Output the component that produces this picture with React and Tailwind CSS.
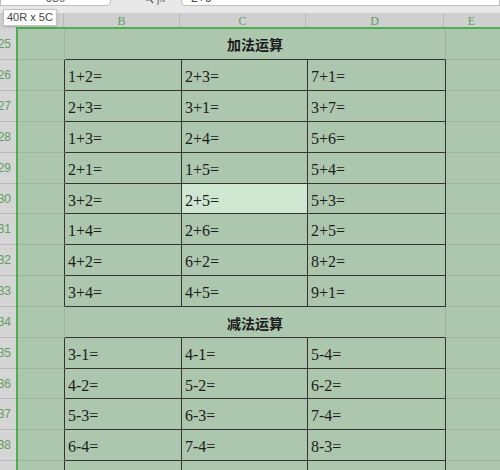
import React from 'react';

const rows = [
  { n: 25, h: 32, title: '加法运算' },
  { n: 26, h: 31, cells: ['1+2=', '2+3=', '7+1='] },
  { n: 27, h: 31, cells: ['2+3=', '3+1=', '3+7='] },
  { n: 28, h: 31, cells: ['1+3=', '2+4=', '5+6='] },
  { n: 29, h: 31, cells: ['2+1=', '1+5=', '5+4='] },
  { n: 30, h: 30, cells: ['3+2=', '2+5=', '5+3='], active: 1 },
  { n: 31, h: 31, cells: ['1+4=', '2+6=', '2+5='] },
  { n: 32, h: 31, cells: ['4+2=', '6+2=', '8+2='] },
  { n: 33, h: 31, cells: ['3+4=', '4+5=', '9+1='] },
  { n: 34, h: 31, title: '减法运算' },
  { n: 35, h: 31, cells: ['3-1=', '4-1=', '5-4='] },
  { n: 36, h: 30, cells: ['4-2=', '5-2=', '6-2='] },
  { n: 37, h: 31, cells: ['5-3=', '6-3=', '7-4='] },
  { n: 38, h: 31, cells: ['6-4=', '7-4=', '8-3='] },
  { n: 39, h: 31, cells: ['', '', ''] },
];

const widths = ['w-[117px]', 'w-[126px]', 'w-[138px]'];
const serif = { fontFamily: '"Liberation Serif", "Times New Roman", serif' };
const sans = { fontFamily: '"Liberation Sans", Arial, sans-serif' };

function Row({ r }) {
  // the row above a table row, or a table row itself, gets dark bottom lines
  const next = rows.find((x) => x.n === r.n + 1);
  const darkBottom = r.cells || (next && next.cells);
  const inTable = !!r.cells;
  return (
    <div className="flex" style={{ height: r.h }}>
      <div className="w-[16px] shrink-0 border-b border-[#b9b9b9] bg-[#d5d5d5] flex items-center justify-end pr-[5px] text-[12px] text-[#5f9e5f] overflow-hidden whitespace-nowrap" style={sans}>
        {r.n}
      </div>
      <div className={`w-[49px] shrink-0 border-b border-b-[#9fb5a0] border-r ${inTable ? 'border-r-[#333]' : 'border-r-[#9fb5a0]'}`} />
      {r.title ? (
        <div className={`w-[381px] shrink-0 border-r border-r-[#9fb5a0] border-b ${darkBottom ? 'border-b-[#333]' : 'border-b-[#9fb5a0]'} flex items-center justify-center pt-[2px] font-bold text-[14px] text-[#1a1a1a]`} style={{ fontFamily: '"Noto Sans CJK SC", sans-serif' }}>
          {r.title}
        </div>
      ) : (
        r.cells.map((c, i) => (
          <div key={i} className={`${widths[i]} shrink-0 border-r border-r-[#333] border-b border-b-[#333] flex items-center pt-[4px] pl-[3px] text-[16px] text-[#1c1c1c] ${r.active === i ? 'bg-[#cfe7d0]' : ''}`} style={serif}>
            {c}
          </div>
        ))
      )}
      <div className="flex-1 border-b border-b-[#9fb5a0]" />
    </div>
  );
}

export default function App() {
  return (
    <div className="relative w-[500px] h-[470px] overflow-hidden bg-[#adc7ae]">
      {/* formula bar, scrolled mostly off the top */}
      <div className="relative h-[13px] bg-[#e8e8e8] overflow-hidden">
        <div className="absolute left-0 top-[-10px] w-[111px] h-[16px] bg-white border border-[#bdbdbd] rounded-br-[4px] flex justify-center">
          <span className="text-[12px] text-[#555] leading-none mt-[1px]" style={sans}>680</span>
        </div>
        <div className="absolute left-[144px] top-[-8px] flex items-center gap-[3px] text-[#666]">
          <svg width="10" height="11" viewBox="0 0 10 11"><circle cx="4" cy="4" r="3.2" fill="none" stroke="#666" strokeWidth="1.2" /><path d="M6.3 6.5 9 10" stroke="#666" strokeWidth="1.4" /></svg>
          <span className="italic text-[12px] leading-none" style={serif}>fx</span>
        </div>
        <div className="absolute left-[181px] right-0 top-[-10px] h-[16px] bg-white border border-[#bdbdbd] rounded-bl-[4px]">
          <span className="absolute left-[9px] top-[1px] text-[12px] text-[#444] leading-none" style={sans}>2+6</span>
        </div>
      </div>

      {/* column headers */}
      <div className="flex h-[15px] bg-[#cfcfcf] text-[12px] text-[#5f9e5f]" style={serif}>
        <div className="w-[16px] shrink-0 border-r border-[#b9b9b9]" />
        <div className="w-[48px] shrink-0 border-r border-[#b9b9b9] flex items-center justify-center">A</div>
        <div className="w-[116px] shrink-0 border-r border-[#b9b9b9] flex items-center justify-center">B</div>
        <div className="w-[126px] shrink-0 border-r border-[#b9b9b9] flex items-center justify-center">C</div>
        <div className="w-[138px] shrink-0 border-r border-[#b9b9b9] flex items-center justify-center">D</div>
        <div className="w-[55px] shrink-0 flex items-center justify-center">E</div>
      </div>

      <div>
        {rows.map((r) => (
          <Row key={r.n} r={r} />
        ))}
      </div>

      {/* selection outline */}
      <div className="absolute left-[16px] top-[27px] right-0 h-[2px] bg-[#4caf50]" />
      <div className="absolute left-[16px] top-[27px] bottom-0 w-[2px] bg-[#4caf50]" />

      {/* size tooltip */}
      <div className="absolute left-[3px] top-[9px] h-[17px] bg-white border border-[#c4c4c4] shadow-sm flex items-center px-[3px] text-[11px] text-[#444] whitespace-nowrap" style={sans}>
        40R x 5C
      </div>
    </div>
  );
}
